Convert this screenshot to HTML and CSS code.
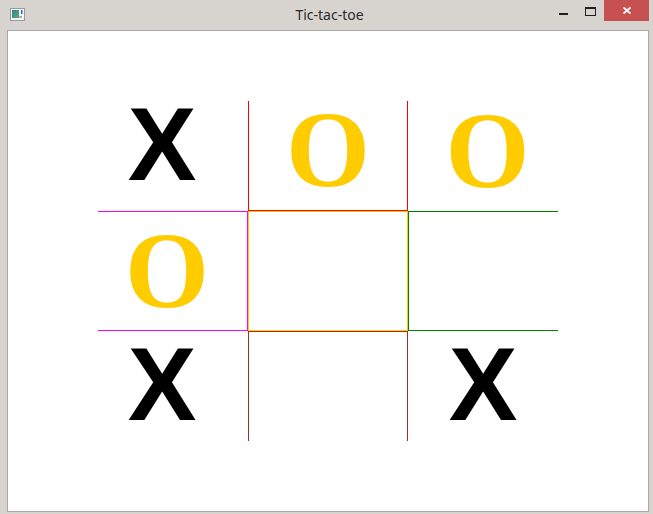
FILE: index.html
```html
<!DOCTYPE html>
<html>
<head>
<meta charset="utf-8">
<title>Tic-tac-toe</title>
<link rel="stylesheet" href="styles.css">
</head>
<body>
<div class="window">
  <div class="titlebar">
    <div class="tb-left">
      <svg class="app-icon" width="15" height="13" viewBox="0 0 15 13">
        <rect x="0.5" y="0.5" width="14" height="12" fill="#f4f4f4" stroke="#9a9a9a"/>
        <defs>
          <linearGradient id="g" x1="0" y1="0" x2="1" y2="1">
            <stop offset="0" stop-color="#2f7fa0"/>
            <stop offset="1" stop-color="#5cae6a"/>
          </linearGradient>
        </defs>
        <rect x="2" y="2" width="7" height="8" fill="url(#g)"/>
        <rect x="11" y="2" width="1.5" height="4" fill="#2a64c8"/>
        <rect x="9" y="8" width="3" height="2" fill="#b0b0b0"/>
      </svg>
    </div>
    <div class="title">Tic-tac-toe</div>
    <div class="controls">
      <div class="btn btn-min"><span class="min-bar"></span></div>
      <div class="btn btn-max"><span class="max-box"></span></div>
      <div class="btn btn-close">
        <svg width="8" height="7" viewBox="0 0 8 7"><path d="M0.5 0.5 L7.5 6.5 M7.5 0.5 L0.5 6.5" stroke="#fff" stroke-width="1.8"/></svg>
      </div>
    </div>
  </div>
  <div class="client">
    <div class="board">
      <div class="cell"><span class="mark x m00">X</span></div>
      <div class="cell top-mid"><span class="mark o m01">O</span></div>
      <div class="cell"><span class="mark o m02">O</span></div>
      <div class="cell mid-left"><span class="mark o m10">O</span></div>
      <div class="cell center"></div>
      <div class="cell mid-right"></div>
      <div class="cell"><span class="mark x m20">X</span></div>
      <div class="cell bot-mid"></div>
      <div class="cell"><span class="mark x m22">X</span></div>
    </div>
  </div>
</div>
</body>
</html>
```

FILE: styles.css
```css
html, body {
  margin: 0;
  padding: 0;
  background: #d7d4cf;
}
.window {
  width: 653px;
  height: 514px;
  box-sizing: border-box;
  background: #d7d4cf;
  padding: 0 4px 2px 7px;
  display: flex;
  flex-direction: column;
}
.titlebar {
  height: 30px;
  margin: 0 -4px 0 -7px;
  padding: 0 4px 0 10px;
  display: grid;
  grid-template-columns: 1fr auto 1fr;
  align-items: start;
}
.tb-left {
  padding-top: 8px;
  display: flex;
}
.app-icon {
  display: block;
}
.title {
  font-family: "Noto Sans", "Open Sans", sans-serif;
  font-size: 14px;
  color: #2b2b2b;
  line-height: 16px;
  padding-top: 7px;
}
.controls {
  display: flex;
  justify-content: flex-end;
}
.btn {
  height: 21px;
  display: flex;
  justify-content: center;
  box-sizing: border-box;
}
.btn-min {
  width: 26px;
  padding-top: 13px;
}
.min-bar {
  width: 9px;
  height: 2px;
  background: #1f1f1f;
}
.btn-max {
  width: 28px;
  padding-top: 7px;
}
.max-box {
  width: 11px;
  height: 9px;
  box-sizing: border-box;
  border: 1px solid #1f1f1f;
  border-top-width: 2px;
}
.btn-close {
  width: 45px;
  background: #c75050;
  align-items: center;
}
.btn-close svg {
  display: block;
}
.client {
  flex: 1;
  background: #fff;
  border: 1px solid #a9a9a9;
  display: flex;
  justify-content: center;
  align-items: center;
}
.board {
  display: grid;
  grid-template-columns: 150px 160px 150px;
  grid-template-rows: 110px 120px 110px;
}
.cell {
  box-sizing: border-box;
  display: flex;
  justify-content: center;
  align-items: center;
}
.top-mid {
  border: 1px solid #ff0000;
  border-top: none;
}
.mid-left {
  border: 1px solid #ff00ff;
  border-left: none;
}
.center {
  border: 1px solid #ffcc00;
}
.mid-right {
  border: 1px solid #008000;
  border-right: none;
}
.bot-mid {
  border: 1px solid #a52a2a;
  border-bottom: none;
}
.mark {
  display: block;
}
.x {
  font-family: "Liberation Sans", Arial, sans-serif;
  font-weight: bold;
  font-size: 103px;
  line-height: 103px;
  color: #000;
}
.o {
  font-family: "Liberation Serif", "Times New Roman", serif;
  font-weight: bold;
  font-size: 108px;
  line-height: 108px;
  color: #ffcc00;
}
.m00 { margin: 0 22px 23px 0; }
.m20 { margin: 0 22px 4px 0; }
.m22 { margin: 0 0 4px 0; }
.m01 { margin: 0 0 11px 0; }
.m02 { margin: 0 0 11px 9px; }
.m10 { margin: 0 11px 0 0; }
```
